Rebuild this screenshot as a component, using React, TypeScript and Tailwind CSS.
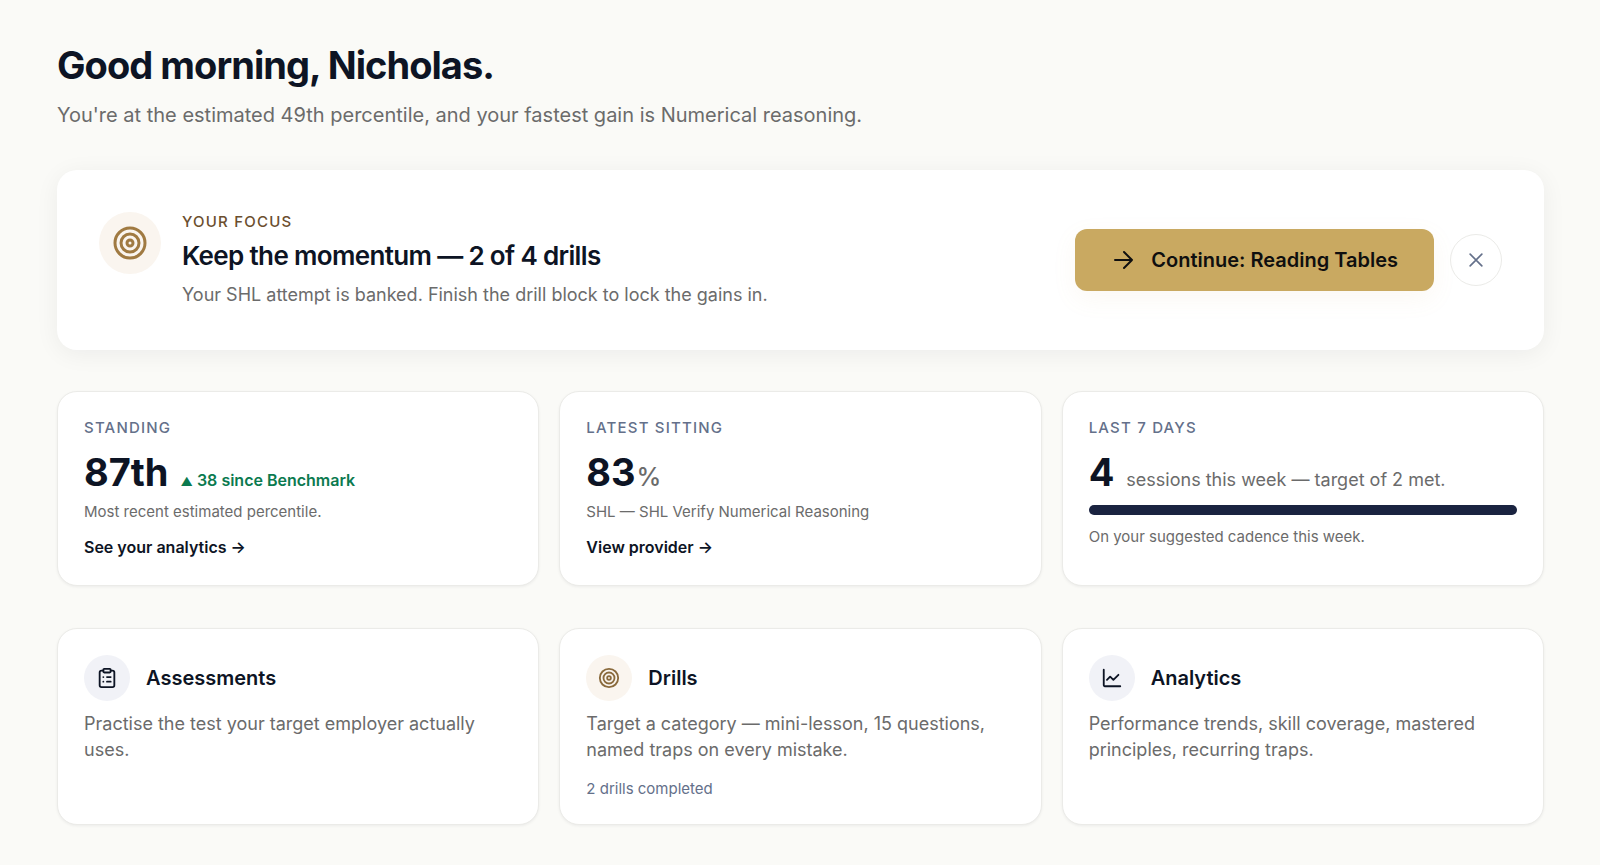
import type { ReactNode } from "react";

const CARD =
  "flex flex-col items-start rounded-[20px] border border-[#ebebe8] bg-white px-[26px] shadow-[0_1px_3px_rgba(15,23,42,0.06)]";

function TargetIcon({ className, strokeWidth }: { className: string; strokeWidth: number }) {
  return (
    <svg viewBox="0 0 24 24" fill="none" stroke="currentColor" strokeWidth={strokeWidth} className={className} aria-hidden="true">
      <circle cx="12" cy="12" r="10" />
      <circle cx="12" cy="12" r="6" />
      <circle cx="12" cy="12" r="2" />
    </svg>
  );
}

function StrokeIcon({ className, strokeWidth = 2, children }: { className: string; strokeWidth?: number; children: ReactNode }) {
  return (
    <svg
      viewBox="0 0 24 24"
      fill="none"
      stroke="currentColor"
      strokeWidth={strokeWidth}
      strokeLinecap="round"
      strokeLinejoin="round"
      className={className}
      aria-hidden="true"
    >
      {children}
    </svg>
  );
}

function StatCard({ label, children }: { label: string; children: ReactNode }) {
  return (
    <section className={`${CARD} pt-[26px] pb-7`}>
      <h2 className="text-[15px] leading-5 font-medium tracking-[0.08em] text-[#64708a] uppercase">{label}</h2>
      {children}
    </section>
  );
}

function LinkCard({ title, icon, tint, text, note }: { title: string; icon: ReactNode; tint: string; text: string; note?: string }) {
  return (
    <a href="#" className={`${CARD} pt-[26px] pb-[25px]`}>
      <div className="flex items-center gap-4">
        <span className={`flex size-[46px] items-center justify-center rounded-full ${tint}`}>{icon}</span>
        <h2 className="text-[20px] leading-7 font-semibold text-[#0d1424]">{title}</h2>
      </div>
      <p className="mt-[10px] text-[18px] leading-[26px] text-[#6b6b6b]">{text}</p>
      {note && <p className="mt-4 text-[15px] leading-5 text-[#64708a]">{note}</p>}
    </a>
  );
}

export default function App() {
  return (
    <main className="min-h-screen bg-[#fafaf7] pt-[41px] pr-14 pb-10 pl-[57px] font-[Inter,sans-serif] text-[#0d1424]">
      <h1 className="text-[38px] leading-[48px] font-bold tracking-tight">Good morning, Nicholas.</h1>
      <p className="mt-3 text-[20px] leading-7 text-[#6b6b6b]">
        You're at the estimated 49th percentile, and your fastest gain is Numerical reasoning.
      </p>

      <section className="mt-[41px] flex items-center justify-between rounded-[20px] bg-white px-[42px] py-10 shadow-[0_4px_24px_rgba(15,23,42,0.06)]">
        <div className="flex items-start gap-[21px]">
          <span className="mt-[2px] flex size-[62px] items-center justify-center rounded-full bg-[#faf5ef] text-[#a07a42]">
            <TargetIcon className="size-9" strokeWidth={2} />
          </span>
          <div className="pb-[2px]">
            <p className="text-[15px] leading-6 font-medium tracking-[0.08em] text-[#6b4e2e] uppercase">Your focus</p>
            <h2 className="mt-1 text-[26px] leading-9 font-semibold tracking-tight">Keep the momentum — 2 of 4 drills</h2>
            <p className="mt-2 text-[18px] leading-[26px] text-[#6b6b6b]">
              Your SHL attempt is banked. Finish the drill block to lock the gains in.
            </p>
          </div>
        </div>
        <div className="flex items-center gap-4">
          <button
            type="button"
            className="flex h-[62px] items-center gap-4 rounded-xl bg-[#c9a961] px-9 text-[20px] font-semibold text-[#0f0f0f] shadow-[0_8px_24px_rgba(201,169,97,0.08)]"
          >
            <StrokeIcon className="size-6">
              <path d="M4 12h17M13 4l8 8-8 8" />
            </StrokeIcon>
            Continue: Reading Tables
          </button>
          <button type="button" aria-label="Dismiss" className="flex size-[52px] items-center justify-center rounded-full border border-[#ebebe8] text-[#64708a]">
            <StrokeIcon className="size-5" strokeWidth={2}>
              <path d="M5 5l14 14M19 5L5 19" />
            </StrokeIcon>
          </button>
        </div>
      </section>

      <div className="mt-[41px] grid grid-cols-3 gap-5">
        <StatCard label="Standing">
          <p className="mt-[10px] flex items-baseline gap-3">
            <span className="text-[38px] leading-[48px] font-bold">87th</span>
            <span className="flex items-baseline gap-1 text-[16px] leading-5 font-semibold text-[#0b7a4f]">
              <span className="text-[12px]">▲</span>
              38 since Benchmark
            </span>
          </p>
          <p className="mt-[6px] text-[15px] leading-5 text-[#6b6b6b]">Most recent estimated percentile.</p>
          <a href="#" className="mt-[15px] text-[16px] leading-5 font-semibold">See your analytics →</a>
        </StatCard>
        <StatCard label="Latest sitting">
          <p className="mt-[10px] flex items-baseline gap-px">
            <span className="text-[38px] leading-[48px] font-bold">83</span>
            <span className="text-[25px] leading-5 font-medium text-[#6b6b6b]">%</span>
          </p>
          <p className="mt-[6px] text-[15px] leading-5 text-[#6b6b6b]">SHL — SHL Verify Numerical Reasoning</p>
          <a href="#" className="mt-[15px] text-[16px] leading-5 font-semibold">View provider →</a>
        </StatCard>
        <StatCard label="Last 7 days">
          <p className="mt-[10px] flex items-baseline gap-3">
            <span className="text-[38px] leading-[48px] font-bold">4</span>
            <span className="text-[18px] leading-5 text-[#6b6b6b]">sessions this week — target of 2 met.</span>
          </p>
          <div role="progressbar" aria-label="Weekly sessions" aria-valuenow={100} className="mt-[9px] h-[10px] w-full rounded-full bg-[#1a2340]" />
          <p className="mt-3 text-[15px] leading-5 text-[#6b6b6b]">On your suggested cadence this week.</p>
        </StatCard>
      </div>

      <div className="mt-[42px] grid grid-cols-3 gap-5">
        <LinkCard
          title="Assessments"
          tint="bg-[#f1f2f7] text-[#0d1424]"
          icon={
            <StrokeIcon className="size-[22px]">
              <rect width="8" height="4" x="8" y="2" rx="1" />
              <path d="M16 4h2a2 2 0 0 1 2 2v14a2 2 0 0 1-2 2H6a2 2 0 0 1-2-2V6a2 2 0 0 1 2-2h2M12 11h4M12 16h4M8 11h.01M8 16h.01" />
            </StrokeIcon>
          }
          text="Practise the test your target employer actually uses."
        />
        <LinkCard
          title="Drills"
          tint="bg-[#faf5ef] text-[#8a6a3c]"
          icon={<TargetIcon className="size-[22px]" strokeWidth={2} />}
          text="Target a category — mini-lesson, 15 questions, named traps on every mistake."
          note="2 drills completed"
        />
        <LinkCard
          title="Analytics"
          tint="bg-[#f1f2f7] text-[#0d1424]"
          icon={
            <StrokeIcon className="size-[22px]">
              <path d="M3 3v17a1 1 0 0 0 1 1h17" />
              <path d="M19 8.5l-5.5 5.5-3.5-3.5L6.5 14" />
            </StrokeIcon>
          }
          text="Performance trends, skill coverage, mastered principles, recurring traps."
        />
      </div>
    </main>
  );
}
